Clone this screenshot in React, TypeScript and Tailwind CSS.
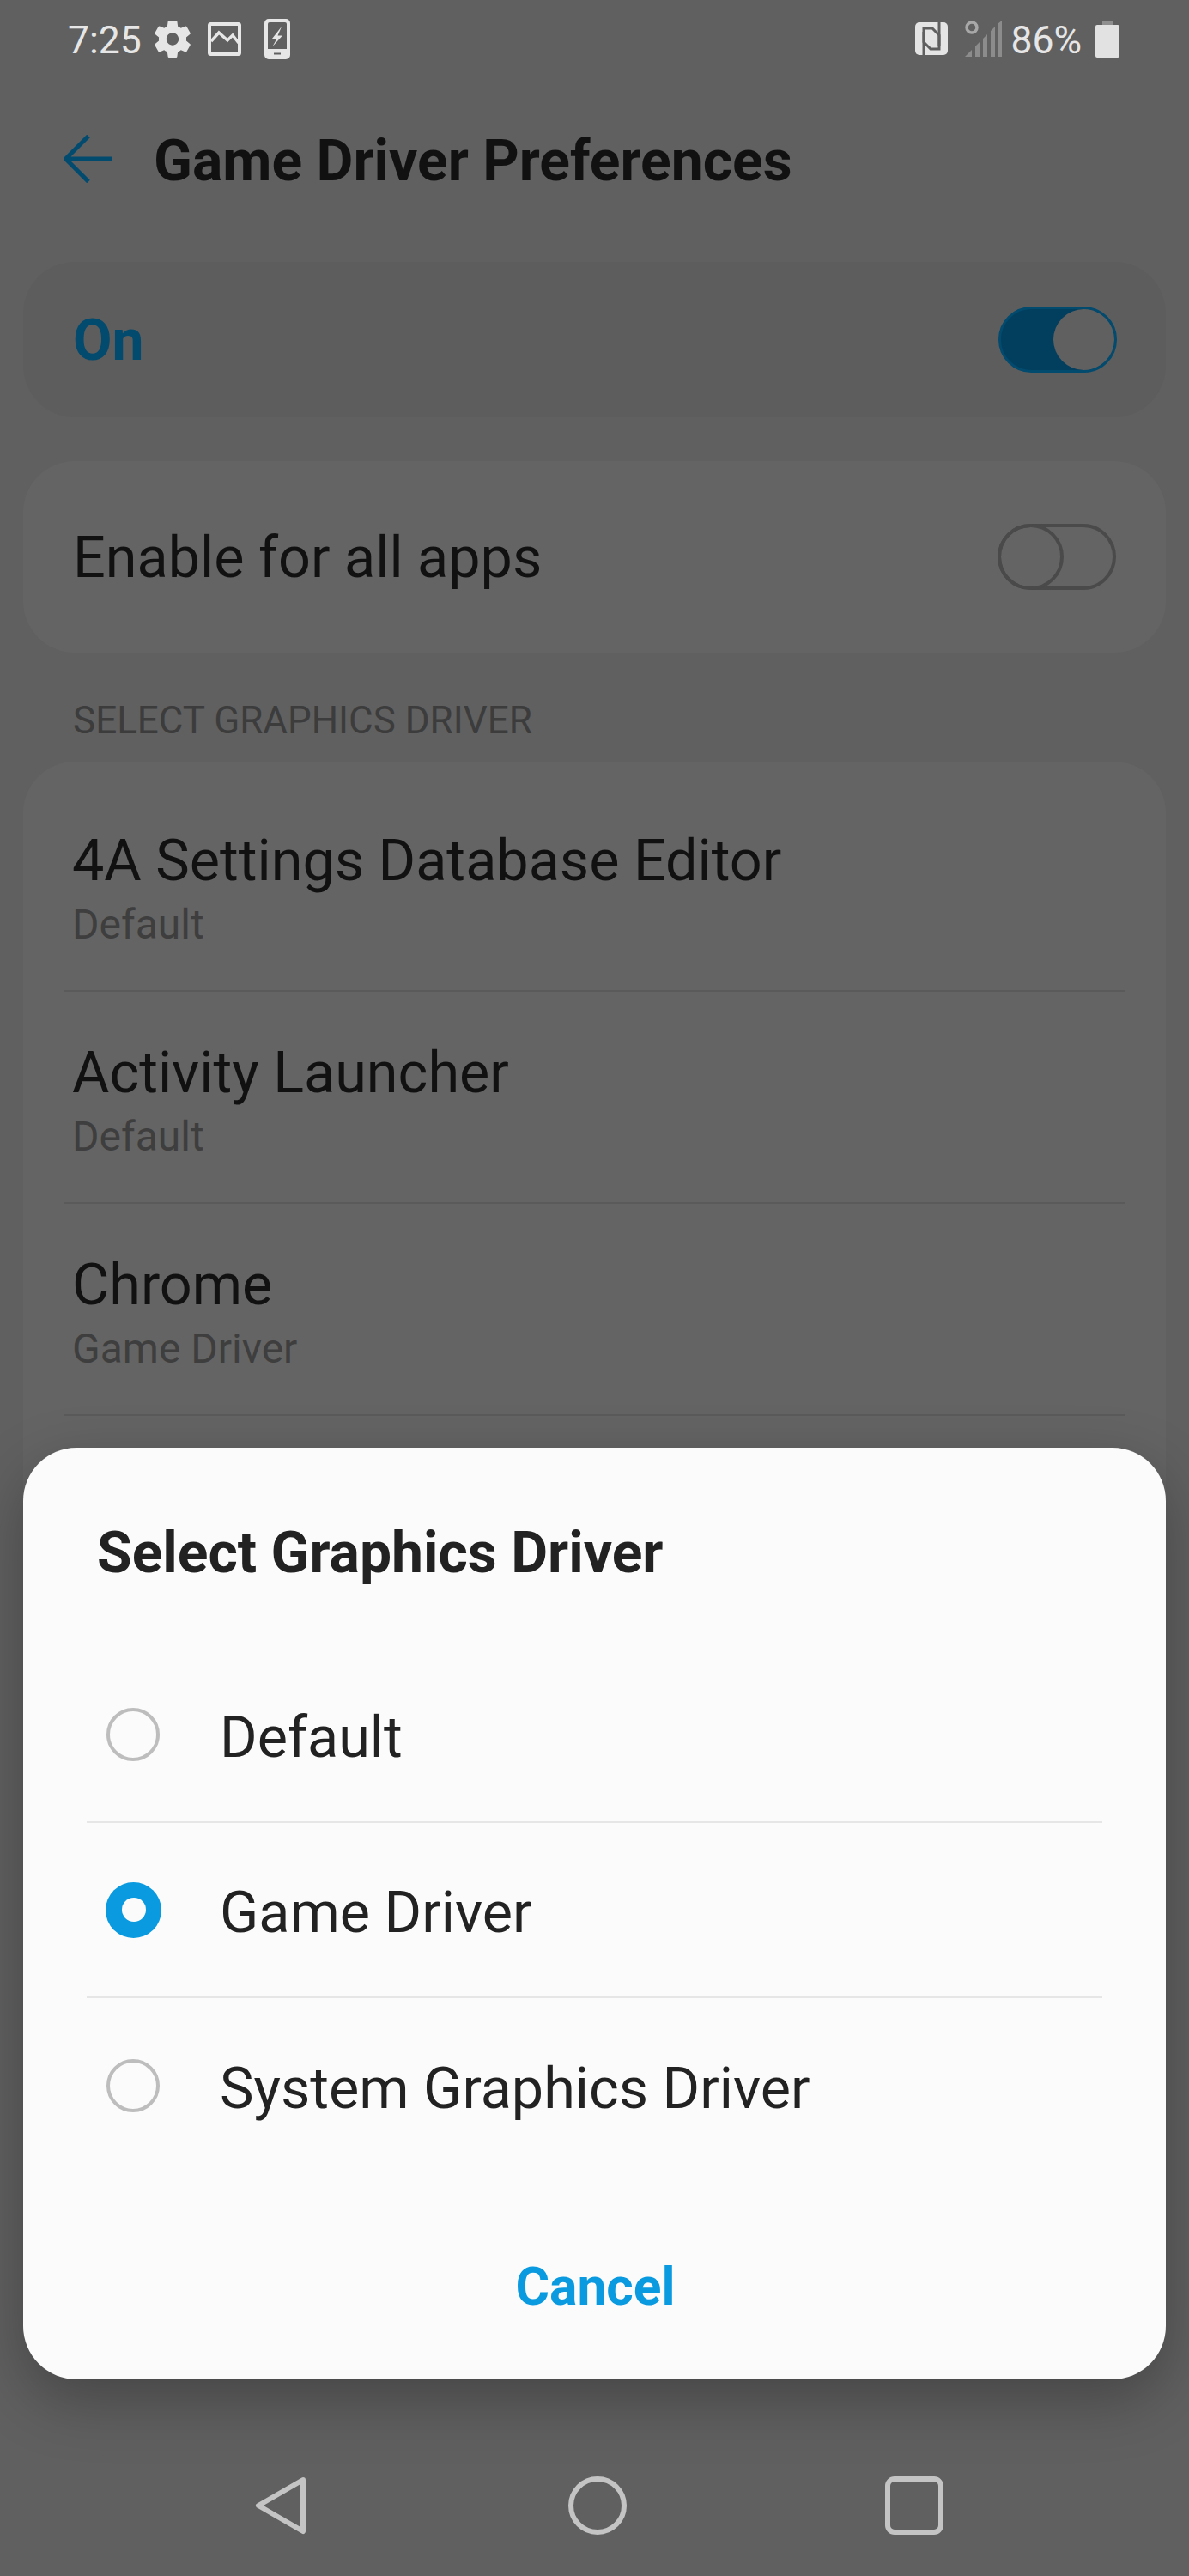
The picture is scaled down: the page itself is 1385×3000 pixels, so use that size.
import React from "react";

function Gear() {
  return (
    <svg viewBox="2.6 2.4 18.8 19.2" className="w-[42px] h-[43px]" fill="#e6e6e6">
      <path d="M19.14,12.94c0.04-0.3,0.06-0.61,0.06-0.94c0-0.32-0.02-0.64-0.07-0.94l2.03-1.58c0.18-0.14,0.23-0.41,0.12-0.61l-1.92-3.32c-0.12-0.22-0.37-0.29-0.59-0.22l-2.39,0.96c-0.5-0.38-1.03-0.7-1.62-0.94L14.4,2.81c-0.04-0.24-0.24-0.41-0.48-0.41h-3.84c-0.24,0-0.43,0.17-0.47,0.41L9.25,5.35C8.66,5.59,8.12,5.92,7.63,6.29L5.24,5.33c-0.22-0.08-0.47,0-0.59,0.22L2.74,8.87C2.62,9.08,2.66,9.34,2.86,9.48l2.03,1.58C4.84,11.36,4.8,11.69,4.8,12s0.02,0.64,0.07,0.94l-2.03,1.58c-0.18,0.14-0.23,0.41-0.12,0.61l1.92,3.32c0.12,0.22,0.37,0.29,0.59,0.22l2.39-0.96c0.5,0.38,1.03,0.7,1.62,0.94l0.36,2.54c0.05,0.24,0.24,0.41,0.48,0.41h3.84c0.24,0,0.44-0.17,0.47-0.41l0.36-2.54c0.59-0.24,1.13-0.56,1.62-0.94l2.39,0.96c0.22,0.08,0.47,0,0.59-0.22l1.92-3.32c0.12-0.22,0.07-0.47-0.12-0.61L19.14,12.94z M12,15.2c-1.76,0-3.2-1.44-3.2-3.2s1.44-3.2,3.2-3.2s3.2,1.44,3.2,3.2S13.76,15.2,12,15.2z" />
    </svg>
  );
}

function Picture() {
  return (
    <svg viewBox="0 0 39 39" className="w-[39px] h-[39px]" fill="none" stroke="#e6e6e6">
      <rect x="2" y="2" width="35" height="35" rx="1.5" strokeWidth="4" />
      <path d="M4 22 L13 12 L23 21 L29 15 L36 24" strokeWidth="3.4" />
    </svg>
  );
}

function ChargePhone() {
  return (
    <svg viewBox="0 0 30 47" className="w-[30px] h-[47px]">
      <path
        fillRule="evenodd"
        fill="#e6e6e6"
        d="M5 0 H25 A5 5 0 0 1 30 5 V42 A5 5 0 0 1 25 47 H5 A5 5 0 0 1 0 42 V5 A5 5 0 0 1 5 0 Z M4 6 V35 H26 V6 A2 2 0 0 0 24 4 H6 A2 2 0 0 0 4 6 Z M11 39.5 V41.5 H19 V39.5 Z"
      />
      <path fill="#e6e6e6" d="M20 9 L9 23 L14.5 23 L9.5 32 L21 19.5 L15.5 19.5 Z" />
    </svg>
  );
}

function Nfc() {
  return (
    <svg viewBox="0 0 38 38" className="w-[38px] h-[38px]">
      <rect x="0" y="0" width="38" height="38" rx="5" fill="#e4e4e4" />
      <path d="M10 38 V7 H20 L28 15 V27" fill="none" stroke="#5f5f5f" strokeWidth="3" />
      <path d="M28 0 V31 H18 L10 23 V11" fill="none" stroke="#5f5f5f" strokeWidth="3" />
    </svg>
  );
}

function Signal() {
  return (
    <svg viewBox="0 0 43 43" className="w-[43px] h-[43px]">
      <circle cx="8" cy="8" r="6" fill="none" stroke="#a8a8a8" strokeWidth="3.5" />
      <path fill="#8c8c8c" d="M0 42 L8 34 V42 Z M12 42 V30 L17 25 V42 Z M21 42 V21 L26 16 V42 Z M30 42 V12 L35 7 V42 Z M38.5 42 V3.5 L43 0 V42 Z" />
    </svg>
  );
}

function Battery() {
  return (
    <svg viewBox="0 0 28 43" className="w-[28px] h-[43px]">
      <rect x="8" y="0" width="12" height="5" fill="#8f8f8f" />
      <path fill="#e2e2e2" d="M0 7 Q0 5 2 5 H26 Q28 5 28 7 V41 Q28 43 26 43 H2 Q0 43 0 41 Z" />
    </svg>
  );
}

function Card({ className = "", children }: { className?: string; children: React.ReactNode }) {
  return <div className={`mx-[27px] rounded-[60px] ${className}`}>{children}</div>;
}

function AppRow({ title, sub }: { title: string; sub: string }) {
  return (
    <div className="h-[247px] mx-[47px] pl-[10px] flex flex-col border-b-2 border-[#5a5a5a]">
      <div className="mt-[57px] h-[74px] leading-[74px] text-[66.5px] text-[#111111]">{title}</div>
      <div className="mt-[11px] h-[54px] leading-[54px] text-[48px] text-[#3e3e3e]">{sub}</div>
    </div>
  );
}

function Radio({ on }: { on?: boolean }) {
  return on ? (
    <div className="-ml-[1px] w-[65px] h-[65px] rounded-full bg-[#0a9ae0] flex items-center justify-center">
      <div className="w-[28px] h-[28px] rounded-full bg-[#fbfbfb]" />
    </div>
  ) : (
    <div className="w-[62px] h-[62px] rounded-full border-[4px] border-[#bdbdbd]" />
  );
}

function Option({ label, on, divider }: { label: string; on?: boolean; divider?: boolean }) {
  return (
    <div className={`h-[204px] mx-[74px] flex items-center ${divider ? "border-b-2 border-[#e6e6e6]" : ""}`}>
      <div className="w-[155px] pl-[23px] flex items-center">
        <Radio on={on} />
      </div>
      <div className="mt-[5px] text-[66.5px] leading-[74px] text-[#222222]">{label}</div>
    </div>
  );
}

export default function App() {
  return (
    <div className="relative w-[1385px] h-[3000px] overflow-hidden bg-[#606060] flex flex-col font-['Roboto',sans-serif]">
      <div className="h-[90px] flex items-center justify-between pl-[79px] pr-[81px] shrink-0">
        <div className="flex items-center">
          <span className="text-[44.5px] leading-[52px] text-[#e6e6e6] w-[101px] mt-[4px]">7:25</span>
          <Gear />
          <span className="w-[20px]" />
          <Picture />
          <span className="w-[27px]" />
          <ChargePhone />
        </div>
        <div className="flex items-center">
          <Nfc />
          <span className="w-[20px]" />
          <Signal />
          <span className="w-[10px]" />
          <span className="text-[44.5px] leading-[52px] text-[#e6e6e6] mt-[4px]">86%</span>
          <span className="w-[16px]" />
          <Battery />
        </div>
      </div>

      <div className="h-[215px] shrink-0 flex items-start">
        <svg viewBox="0 0 56 56" className="w-[56px] h-[56px] ml-[74px] mt-[67px]" fill="none" stroke="#024a6e" strokeWidth="5">
          <path d="M29 1.5 L2.5 28 L29 54.5 M3 28 H56" />
        </svg>
        <h1 className="ml-[49px] mt-[61px] text-[66px] leading-[74px] font-bold text-[#111111]">Game Driver Preferences</h1>
      </div>

      <Card className="h-[181px] bg-[#5d5d5d] flex items-center justify-between pl-[58px] pr-[57px] shrink-0">
        <span className="mt-[2px] text-[66px] font-bold text-[#024a6e]">On</span>
        <div className="w-[138px] h-[77px] rounded-full bg-[#023f5f] border-[3px] border-[#024a6e] flex items-center justify-end">
          <div className="w-[71px] h-[71px] rounded-full bg-[#606060]" />
        </div>
      </Card>

      <Card className="mt-[51px] h-[223px] bg-[#646464] flex items-center justify-between pl-[58px] pr-[58px] shrink-0">
        <span className="mt-[3px] text-[66.5px] text-[#111111]">Enable for all apps</span>
        <div className="w-[138px] h-[77px] rounded-full border-[4px] border-[#4a4a4a] flex items-center">
          <div className="-ml-[4px] w-[77px] h-[77px] rounded-full border-[4px] border-[#4a4a4a]" />
        </div>
      </Card>

      <div className="h-[127px] shrink-0 pl-[85px] pt-[53px] text-[44px] leading-[52px] text-[#3c3c3c]">SELECT GRAPHICS DRIVER</div>

      <Card className="h-[1800px] pt-[21px] bg-[#646464] shrink-0">
        <AppRow title="4A Settings Database Editor" sub="Default" />
        <AppRow title="Activity Launcher" sub="Default" />
        <AppRow title="Chrome" sub="Game Driver" />
      </Card>

      <div className="absolute left-0 right-0 bottom-0 h-[160px] flex items-center">
        <div className="w-full flex items-start justify-start pl-[296px] -mt-[4px]">
          <svg viewBox="0 0 62 70" className="w-[62px] h-[70px]" fill="none" stroke="#c4c4c4" strokeWidth="6" strokeLinejoin="round">
            <path d="M57 5 L5 35 L57 65 Z" />
          </svg>
          <svg viewBox="0 0 70 70" className="w-[70px] h-[70px] ml-[303px]" fill="none" stroke="#c4c4c4" strokeWidth="6">
            <circle cx="35" cy="35" r="31" />
          </svg>
          <svg viewBox="0 0 70 70" className="w-[70px] h-[70px] ml-[299px]" fill="none" stroke="#c4c4c4" strokeWidth="6">
            <rect x="4" y="4" width="62" height="62" rx="8" />
          </svg>
        </div>
      </div>

      <div className="absolute left-[27px] top-[1686px] w-[1331px] h-[1085px] rounded-[62px] bg-[#fbfbfb] shadow-[0_24px_70px_rgba(0,0,0,0.28)] flex flex-col">
        <h2 className="ml-[86px] mt-[86px] text-[66px] leading-[74px] font-bold text-[#222222]">Select Graphics Driver</h2>
        <div className="mt-[73px]">
          <Option label="Default" divider />
          <Option label="Game Driver" on divider />
          <Option label="System Graphics Driver" />
        </div>
        <div className="mt-[98px] text-center text-[60.5px] leading-[70px] font-bold text-[#0a9ae0] translate-x-[1px]">Cancel</div>
      </div>
    </div>
  );
}
